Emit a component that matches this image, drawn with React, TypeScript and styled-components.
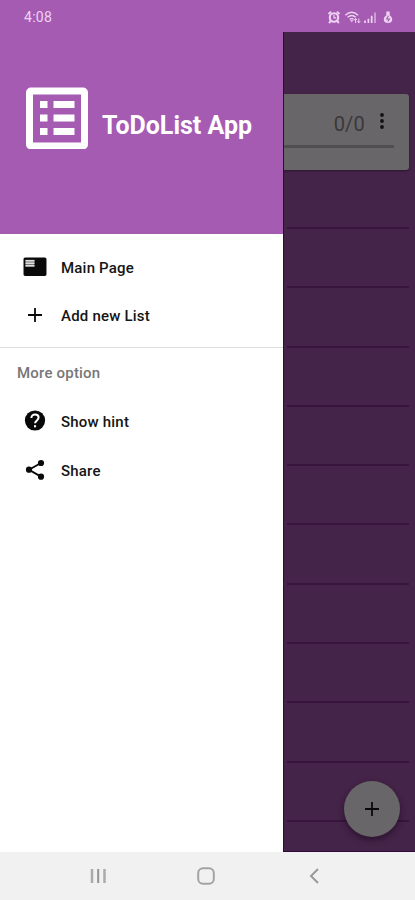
import React from 'react';
import styled, { createGlobalStyle } from 'styled-components';

const GlobalStyle = createGlobalStyle`
  * { box-sizing: border-box; }
  body { margin: 0; font-family: Roboto, sans-serif; }
  svg { display: block; flex: none; }
`;

const Screen = styled.div`
  width: 415px;
  height: 900px;
  display: flex;
  flex-direction: column;
  overflow: hidden;
  background: #fff;
`;

const StatusBar = styled.header`
  height: 32px;
  flex: none;
  display: flex;
  align-items: center;
  justify-content: space-between;
  padding: 2px 20px 0 24px;
  background: #a55bb2;
  color: #eed3f2;
`;

const Clock = styled.span`
  font-size: 14px;
  line-height: 16px;
  letter-spacing: 0.3px;
`;

const Body = styled.div`
  height: 820px;
  flex: none;
  display: flex;
`;

const Drawer = styled.aside`
  width: 283px;
  flex: none;
  background: #fff;
`;

const Banner = styled.div`
  height: 202px;
  display: flex;
  align-items: flex-start;
  padding: 55px 0 0 26px;
  gap: 14px;
  background: #a55bb2;
`;

const Title = styled.h1`
  margin: 24px 0 0;
  font-size: 25px;
  line-height: 30px;
  font-weight: 700;
  color: #fff;
  white-space: nowrap;
`;

const Menu = styled.nav<{ $top: number; $bottom: number }>`
  display: flex;
  flex-direction: column;
  padding: ${p => p.$top}px 0 ${p => p.$bottom}px;
`;

const MenuItem = styled.a`
  height: 48.5px;
  display: flex;
  align-items: center;
  padding-left: 22px;
  gap: 13px;
  color: #151515;
`;

const MenuLabel = styled.span`
  font-size: 15px;
  line-height: 20px;
  font-weight: 500;
  letter-spacing: 0.2px;
  padding-top: 2px;
  white-space: nowrap;
`;

const SectionTitle = styled.div`
  border-top: 1px solid #dedede;
  height: 50px;
  padding: 1px 0 0 17px;
  display: flex;
  align-items: center;
  font-size: 15px;
  font-weight: 500;
  letter-spacing: 0.2px;
  color: #777;
`;

const Content = styled.main`
  flex: 1;
  position: relative;
  padding: 62px 6px 0 0;
  background: #442448;
  border-left: 1px solid #32083a;
  border-bottom: 1px solid #32083a;
  overflow: hidden;
`;

const Card = styled.section`
  height: 76px;
  padding: 16px 15px 0 0;
  border-radius: 0 3px 3px 0;
  background: #686668;
  box-shadow: 0 1px 2px #2c1430;
`;

const CardTop = styled.div`
  height: 35px;
  display: flex;
  align-items: flex-start;
  justify-content: flex-end;
  gap: 14px;
  padding-right: 9px;
`;

const Counter = styled.span`
  font-size: 20px;
  line-height: 28px;
  letter-spacing: 0.2px;
  color: #393939;
`;

const Progress = styled.div`
  height: 3px;
  background: #504e50;
`;

const Rules = styled.div`
  padding: 57px 0 0 3px;
  display: flex;
  flex-direction: column;
  gap: 57.3px;
`;

const Rule = styled.div`
  height: 2px;
  flex: none;
  background: #38153d;
`;

const Fab = styled.button`
  position: absolute;
  right: 15px;
  bottom: 14px;
  width: 56px;
  height: 56px;
  padding: 0;
  border: 0;
  border-radius: 50%;
  display: flex;
  align-items: center;
  justify-content: center;
  background: #686668;
  color: #080808;
  box-shadow: 0 3px 6px rgba(20, 0, 25, 0.5);
`;

const NavBar = styled.footer`
  height: 48px;
  flex: none;
  display: grid;
  grid-template-columns: repeat(3, 108px);
  justify-content: center;
  align-items: center;
  justify-items: center;
  padding-right: 3px;
  background: #f1f1f1;
`;

const LogoIcon = () => (
  <svg width="62" height="62" viewBox="0 0 62 62">
    <rect x="3.5" y="4" width="55" height="55" rx="1.5" fill="none" stroke="#fff" strokeWidth="7" strokeLinejoin="round" />
    <g fill="#fff">
      {[14, 27.5, 41].map(y => (
        <React.Fragment key={y}>
          <rect x="14" y={y} width="7.5" height="7" />
          <rect x="27.5" y={y} width="21" height="7" />
        </React.Fragment>
      ))}
    </g>
  </svg>
);

const StatusIcons = () => (
  <svg width="68" height="16" viewBox="0 0 68 16" fill="none" stroke="#eed3f2">
    <circle cx="7" cy="8.5" r="4.2" strokeWidth="2.1" />
    <path d="M1.5 5 4.2 2.6M12.500 5 9.800 2.600M3.800 12 2 14M10.200 12l1.800 2" strokeWidth="1.9" />
    <path d="M7 6v2.8h2.200" strokeWidth="1.2" />
    <path d="M18.3 6.2c4-3.6 8.800-3.600 12.800 0M20.600 8.300c2.600-2.200 5.600-2.200 8.200 0M22.800 10.400c1.200-1 2.600-1 3.800 0" strokeWidth="1.400" />
    <path d="m23 11.300 1.800 2 1.500-2z" fill="#eed3f2" stroke="none" />
    <path d="M28.600 14V9.800M27 11.300l1.600-1.800 1.200 1.500M31.800 9.500V14M30.400 12.200l1.400 1.600 1.500-1.600" strokeWidth="1" />
    <path d="M38 14v-2.500M41.400 14V9.800M44.700 14V6.800" strokeWidth="1.700" />
    <path d="M48 14V3.400" strokeWidth="1.700" opacity=".65" />
    <path d="M59.300 2.500h3.400v4c1.800 1 2.500 2.300 2.500 4.100 0 2-1.200 3.400-4.200 3.400s-4.200-1.400-4.200-3.400c0-1.800.7-3.100 2.500-4.100z" fill="#eed3f2" stroke="none" />
    <path d="M61.500 6.800 59.600 10h2.900l-1.800 2.500" stroke="#a55bb2" strokeWidth="1.100" />
  </svg>
);

const PageIcon = () => (
  <svg width="26" height="26" viewBox="0 0 24 24">
    <path fill="#090909" d="M3 3.300h18c1 0 1.600.7 1.600 1.600v13.700c0 .9-.6 1.600-1.600 1.600H3c-1 0-1.600-.7-1.600-1.600V4.900c0-.9.6-1.600 1.600-1.600z" />
    <path d="M3.200 5.300h8.300v6.500H3.200z" fill="#777" />
    <path d="M3.200 6.300h8.300M3.200 8.600h8.300M3.200 10.900h8.300" stroke="#ddd" strokeWidth="1.300" />
  </svg>
);

const PlusIcon = ({ size }: { size: number }) => (
  <svg width={size} height={size} viewBox="0 0 26 26">
    <path d="M13 6v14M6 13h14" fill="none" stroke="#0a0a0a" strokeWidth="1.800" />
  </svg>
);

const HelpIcon = () => (
  <svg width="26" height="26" viewBox="0 0 26 26">
    <circle cx="13" cy="12.500" r="10.100" fill="#080808" />
    <path d="M9.400 9.900c0-2.100 1.500-3.500 3.600-3.500s3.600 1.300 3.600 3.200c0 2.700-3.500 2.900-3.500 5.700" fill="none" stroke="#fff" strokeWidth="2" />
    <path d="M12 17.200h2.100v2.100H12z" fill="#fff" />
  </svg>
);

const ShareIcon = () => (
  <svg width="26" height="26" viewBox="0 0 26 26" fill="#0a0a0a">
    <path d="M19 6 7 12.700l12 6.900" fill="none" stroke="#0a0a0a" strokeWidth="1.900" />
    <circle cx="19" cy="6" r="3.100" />
    <circle cx="7" cy="12.700" r="3.100" />
    <circle cx="19" cy="19.700" r="3.100" />
  </svg>
);

const MoreIcon = () => (
  <svg width="6" height="27" viewBox="0 0 6 27" fill="#111">
    <circle cx="3" cy="5" r="1.900" />
    <circle cx="3" cy="11" r="1.900" />
    <circle cx="3" cy="17" r="1.900" />
  </svg>
);

const RecentsIcon = () => (
  <svg width="18" height="16" viewBox="0 0 18 16" fill="none" stroke="#aaa">
    <path d="M3 1v14M15.500 1v14" strokeWidth="2.500" />
    <path d="M9.200 1v14" strokeWidth="2" stroke="#929292" />
  </svg>
);

const HomeIcon = () => (
  <svg width="18" height="18" viewBox="0 0 18 18">
    <rect x="1.200" y="1.200" width="15.600" height="15.600" rx="4.800" fill="none" stroke="#a3a3a3" strokeWidth="2" />
  </svg>
);

const BackIcon = () => (
  <svg width="12" height="16" viewBox="0 0 12 16">
    <path d="M10 1 3 8l7 7" fill="none" stroke="#999" strokeWidth="2" />
  </svg>
);

const ruleKeys = Array.from({ length: 11 }, (_, i) => i);

export default function App() {
  return (
    <>
      <GlobalStyle />
      <Screen>
        <StatusBar>
          <Clock>4:08</Clock>
          <StatusIcons />
        </StatusBar>
        <Body>
          <Drawer>
            <Banner>
              <LogoIcon />
              <Title>ToDoList App</Title>
            </Banner>
            <Menu $top={8.5} $bottom={7.5}>
              <MenuItem><PageIcon /><MenuLabel>Main Page</MenuLabel></MenuItem>
              <MenuItem><PlusIcon size={26} /><MenuLabel>Add new List</MenuLabel></MenuItem>
            </Menu>
            <SectionTitle>More option</SectionTitle>
            <Menu $top={0} $bottom={0}>
              <MenuItem><HelpIcon /><MenuLabel>Show hint</MenuLabel></MenuItem>
              <MenuItem><ShareIcon /><MenuLabel>Share</MenuLabel></MenuItem>
            </Menu>
          </Drawer>
          <Content>
            <Card>
              <CardTop>
                <Counter>0/0</Counter>
                <MoreIcon />
              </CardTop>
              <Progress />
            </Card>
            <Rules>
              {ruleKeys.map(k => <Rule key={k} />)}
            </Rules>
            <Fab aria-label="Add"><PlusIcon size={26} /></Fab>
          </Content>
        </Body>
        <NavBar>
          <RecentsIcon />
          <HomeIcon />
          <BackIcon />
        </NavBar>
      </Screen>
    </>
  );
}
